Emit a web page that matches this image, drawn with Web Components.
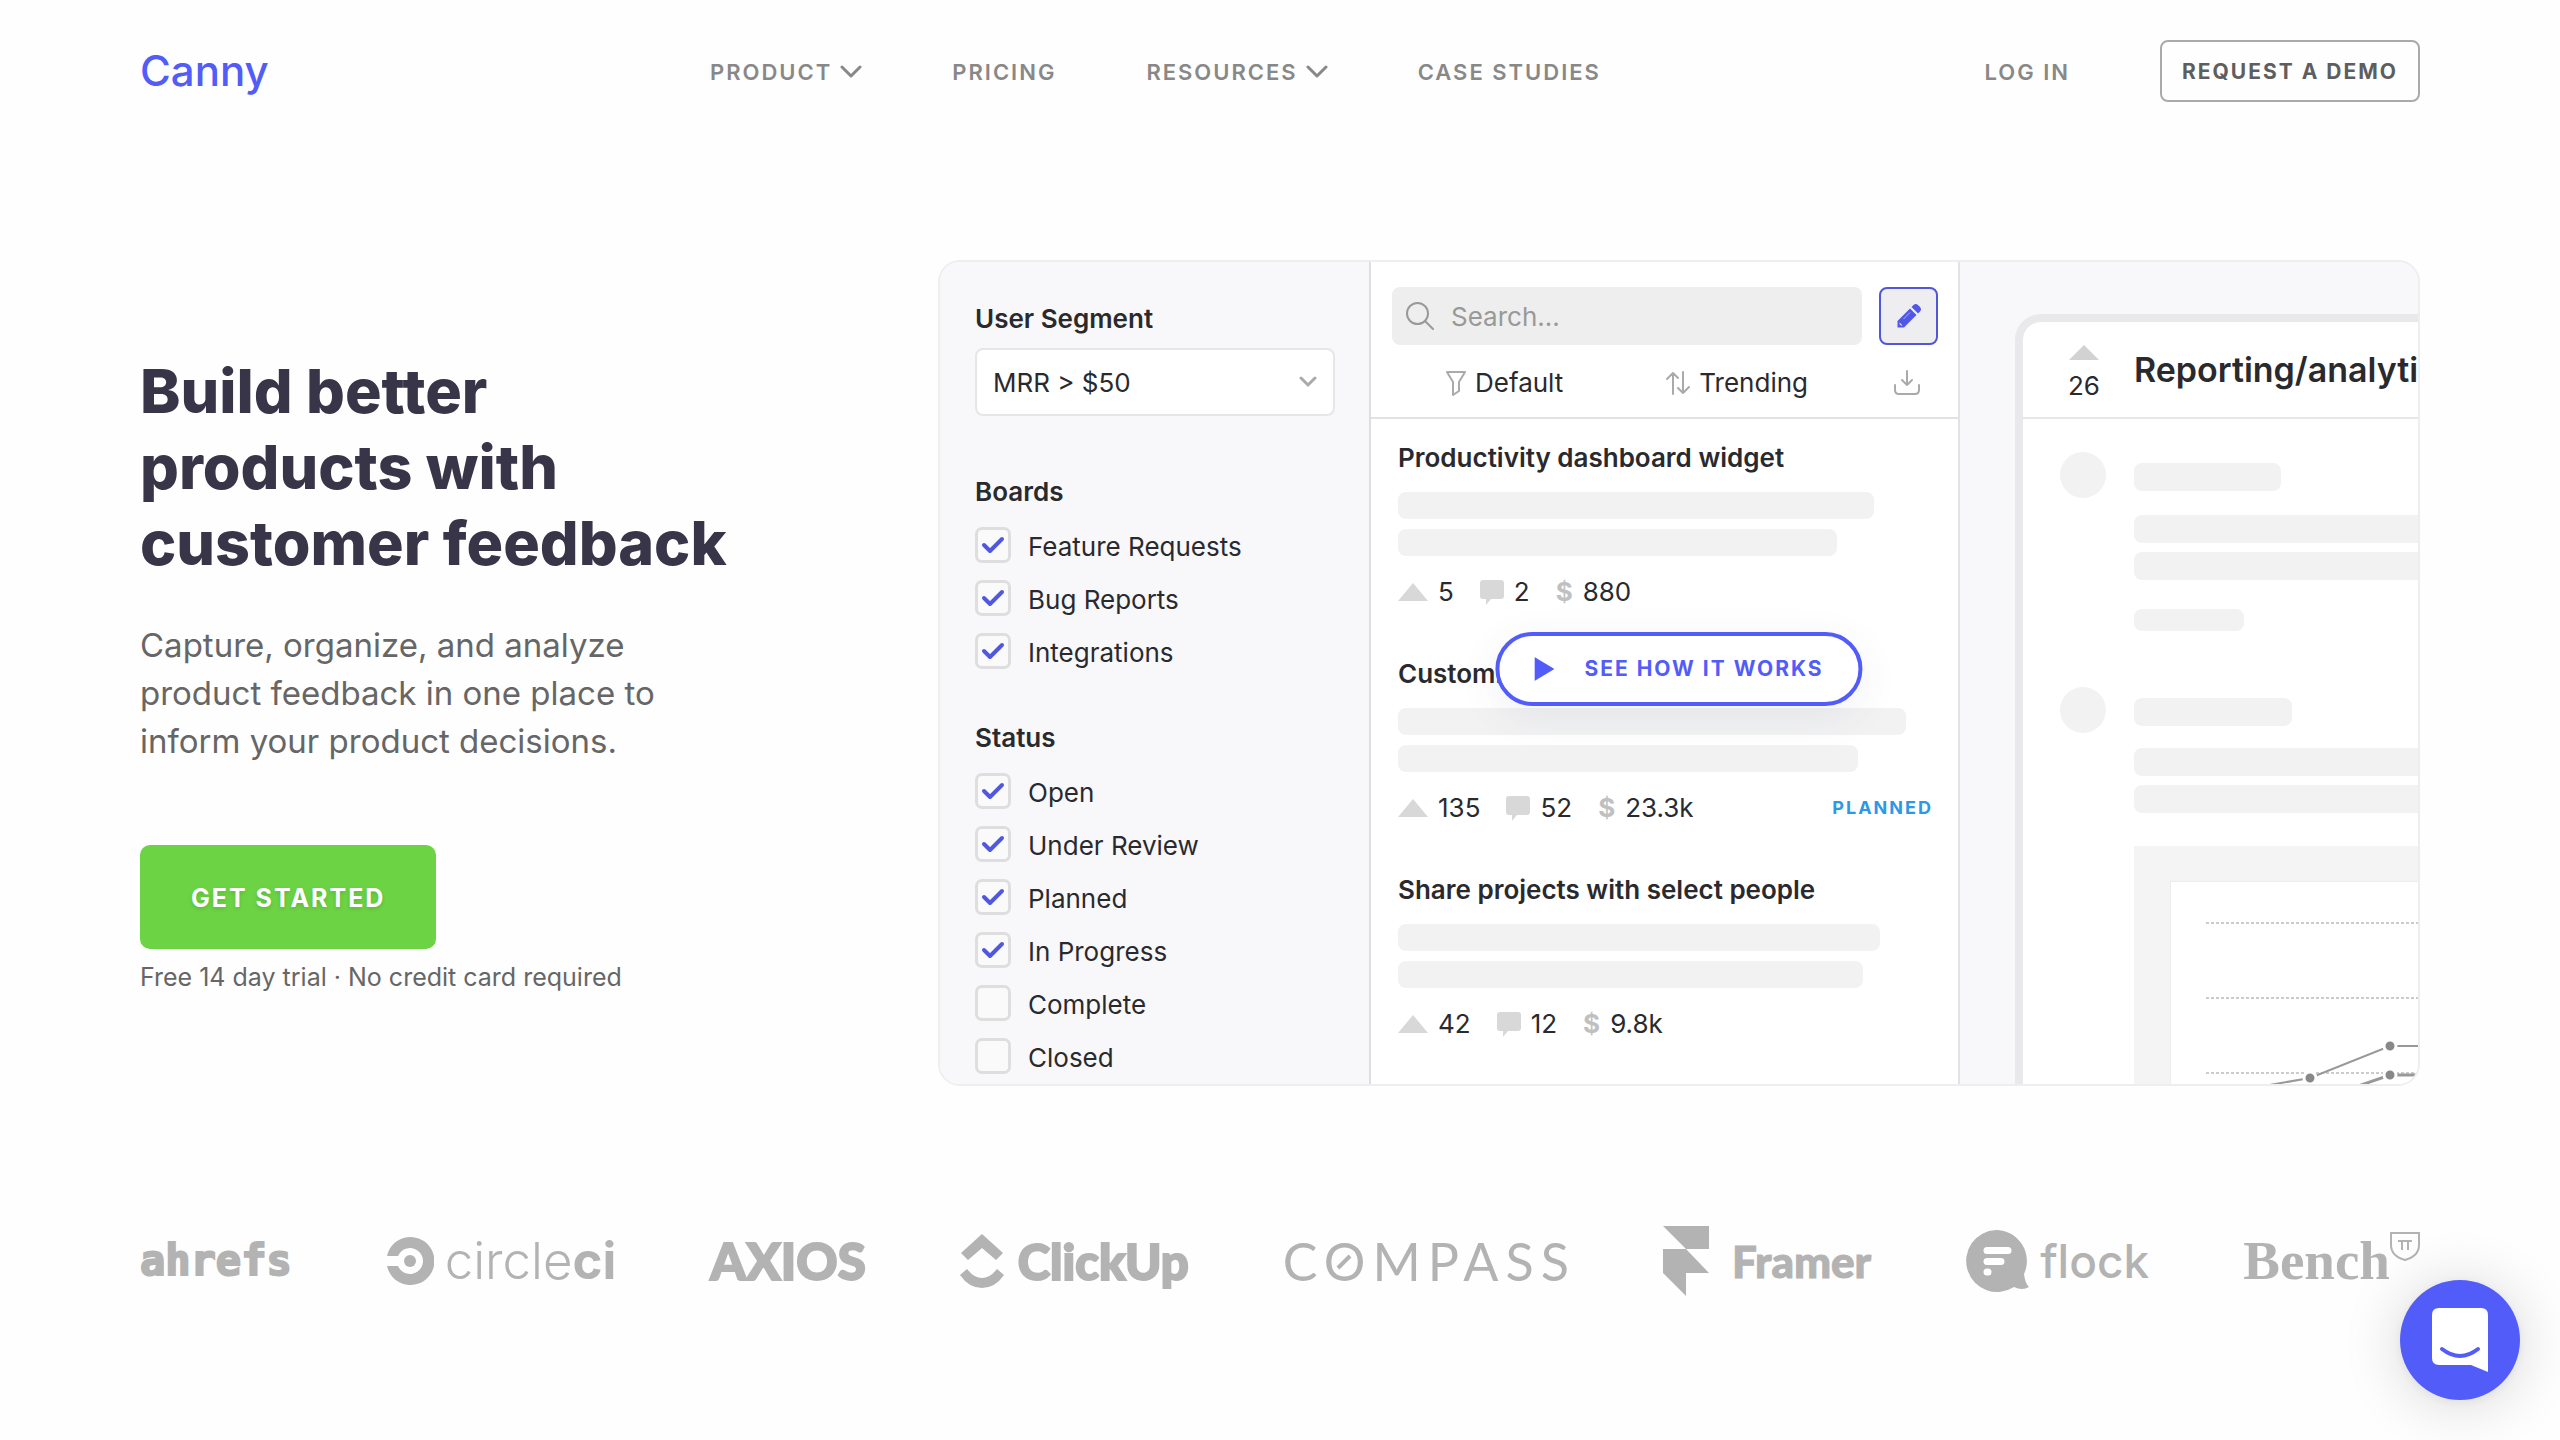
<!DOCTYPE html>
<html lang="en">
<head>
<meta charset="utf-8">
<title>Canny</title>
<style>
  html { --brand: #525df9; --ink: #2a2a2e; --muted: #888; --logo: #b3b3b3; --line: #e2e2e4; --skeleton: #f2f2f2; --panel: #f8f8fa; }
  body { margin: 0; background: #fefefe; color: var(--ink); font-family: Inter, "Liberation Sans", sans-serif; }
</style>
</head>
<body>
<canny-page></canny-page>

<script>
const define = (name, html, setup) => {
  const template = document.createElement('template');
  template.innerHTML = '<style>*{box-sizing:border-box}svg{display:block;flex:none}</style>' + html;
  customElements.define(name, class extends HTMLElement {
    constructor() {
      super();
      this.attachShadow({ mode: 'open' }).append(template.content.cloneNode(true));
    }
    connectedCallback() { if (setup) setup(this, this.shadowRoot); }
  });
};

define('nav-link', `
<style>
  :host { display: block; }
  a { display: flex; align-items: center; gap: 8px; padding-top: 2px; color: var(--muted); text-decoration: none; font-size: 22px; font-weight: 600; line-height: 28px; letter-spacing: 2px; white-space: nowrap; }
  svg { display: none; }
  :host([menu]) svg { display: block; }
</style>
<a href="#"><slot></slot><svg width="22" height="14" viewBox="0 0 22 14" fill="none" stroke="currentColor" stroke-width="3" stroke-linecap="round" stroke-linejoin="round"><path d="M2 2l9 9 9-9"/></svg></a>`);

define('site-header', `
<style>
  :host { display: grid; grid-template-columns: 25% 1fr auto; align-items: center; }
  .logo { color: var(--brand); font-size: 42px; font-weight: 500; line-height: 56px; text-decoration: none; }
  nav { display: flex; gap: 90px; }
  .side { display: flex; align-items: center; gap: 90px; }
  button { height: 62px; padding: 2px 20px 0; border: 2px solid #aaa; border-radius: 8px; background: none; color: #5e5e5e; font: 700 21px/28px Inter, sans-serif; letter-spacing: 2px; white-space: nowrap; }
</style>
<a class="logo" href="#">Canny</a>
<nav>
  <nav-link menu>PRODUCT</nav-link>
  <nav-link>PRICING</nav-link>
  <nav-link menu>RESOURCES</nav-link>
  <nav-link>CASE STUDIES</nav-link>
</nav>
<div class="side"><nav-link>LOG IN</nav-link><button type="button">REQUEST A DEMO</button></div>`);

define('hero-copy', `
<style>
  :host { display: block; white-space: nowrap; }
  h1 { margin: 0; color: #383549; font-size: 61px; font-weight: 800; line-height: 76px; }
  p { margin: 40px 0 80px; color: #666; font-size: 33px; line-height: 48px; }
  button { display: block; height: 104px; padding: 2px 51px 0; border: 0; border-radius: 10px; background: #6cd444; color: #fff; font: 700 25px/32px Inter, sans-serif; letter-spacing: 2px; text-shadow: 0 2px 4px rgba(0,0,0,.15); }
  small { display: block; margin-top: 12px; color: #666; font-size: 25px; line-height: 32px; }
</style>
<h1>Build better<br>products with<br>customer feedback</h1>
<p>Capture, organize, and analyze<br>product feedback in one place to<br>inform your product decisions.</p>
<button type="button">GET STARTED</button>
<small>Free 14 day trial · No credit card required</small>`);

define('check-row', `
<style>
  :host { display: block; }
  label { display: flex; align-items: center; gap: 17px; font-size: 26px; line-height: 33px; }
  .text { padding-top: 2px; }
  .box { display: grid; place-items: center; flex: none; }
  .box > * { grid-area: 1 / 1; }
  input { appearance: none; width: 36px; height: 36px; margin: 0; border: 3px solid #dededf; border-radius: 7px; background: #fafafb; }
  svg { visibility: hidden; color: #5158e0; }
  input:checked + svg { visibility: visible; }
</style>
<label><span class="box"><input type="checkbox"><svg width="24" height="18" viewBox="0 0 24 18" fill="none" stroke="currentColor" stroke-width="4" stroke-linecap="round" stroke-linejoin="round"><path d="M3 9l6 6L21 3"/></svg></span><span class="text"><slot></slot></span></label>`,
(host, root) => { root.querySelector('input').checked = host.hasAttribute('checked'); });

define('filter-panel', `
<style>
  :host { display: flex; flex-direction: column; gap: 53px; padding: 41px 34px 10px 35px; background: var(--panel); border-right: 2px solid #dedee0; }
  h2, .title { display: block; margin: 0 0 19px; font-size: 26px; font-weight: 600; line-height: 32px; }
  .title { margin-bottom: 13px; }
  section { display: flex; flex-direction: column; }
  .rows { display: flex; flex-direction: column; gap: 17px; }
  .select { display: grid; align-items: center; margin-bottom: 7px; }
  .select > * { grid-area: 1 / 1; }
  select { appearance: none; width: 100%; height: 68px; padding: 2px 16px 0; border: 2px solid #e6e6e9; border-radius: 8px; background: #fff; color: var(--ink); font: 26px/32px Inter, sans-serif; }
  svg { justify-self: end; margin-right: 18px; pointer-events: none; }
</style>
<section>
  <label class="title" for="segment">User Segment</label>
  <div class="select">
    <select id="segment"><option>MRR &gt; $50</option></select>
    <svg width="18" height="12" viewBox="0 0 18 12" fill="none" stroke="#aaa" stroke-width="3" stroke-linecap="round"><path d="M2 2l7 7 7-7"/></svg>
  </div>
</section>
<section>
  <h2>Boards</h2>
  <div class="rows">
    <check-row checked>Feature Requests</check-row>
    <check-row checked>Bug Reports</check-row>
    <check-row checked>Integrations</check-row>
  </div>
</section>
<section>
  <h2>Status</h2>
  <div class="rows">
    <check-row checked>Open</check-row>
    <check-row checked>Under Review</check-row>
    <check-row checked>Planned</check-row>
    <check-row checked>In Progress</check-row>
    <check-row>Complete</check-row>
    <check-row>Closed</check-row>
  </div>
</section>`);

define('post-item', `
<style>
  :host { display: block; }
  h3 { margin: 0 0 18px; font-size: 26px; font-weight: 600; line-height: 32px; white-space: nowrap; }
  .bar { height: 27px; border-radius: 8px; background: var(--skeleton); }
  .bar + .bar { margin-top: 10px; }
  .stats { display: flex; align-items: center; gap: 26px; margin-top: 20px; font-size: 26px; line-height: 32px; }
  .stat { display: flex; align-items: center; gap: 10px; }
  .stat b { color: #c0c0c0; font-weight: 700; }
  .tag { margin-left: auto; color: #2b98e8; font-size: 18px; font-weight: 700; letter-spacing: 2px; }
</style>
<h3><slot></slot></h3>
<div class="bar"></div><div class="bar"></div>
<div class="stats">
  <span class="stat"><svg width="30" height="18" viewBox="0 0 30 18" fill="#d8d8d8"><path d="M15 0l15 18H0z"/></svg><span id="votes"></span></span>
  <span class="stat"><svg width="24" height="26" viewBox="0 0 24 26" fill="#d8d8d8"><path d="M3 1h18q3 0 3 3v13q0 3-3 3H11l-5 6v-6H3q-3 0-3-3V4q0-3 3-3z"/></svg><span id="comments"></span></span>
  <span class="stat"><b>$</b><span id="mrr"></span></span>
  <span class="tag" id="tag"></span>
</div>`,
(host, root) => {
  for (const id of ['votes', 'comments', 'mrr', 'tag']) root.getElementById(id).textContent = host.getAttribute(id) || '';
  const widths = host.getAttribute('bars').split(' ');
  root.querySelectorAll('.bar').forEach((bar, i) => { bar.style.width = widths[i] + '%'; });
});

define('post-list', `
<style>
  :host { display: block; background: #fff; border-right: 2px solid var(--line); }
  header { padding: 25px 20px 18px 21px; border-bottom: 2px solid var(--line); }
  .top { display: flex; gap: 17px; }
  .search { flex: 1; min-width: 0; display: flex; align-items: center; gap: 17px; height: 58px; padding: 0 14px; border-radius: 8px; background: #eee; }
  input { flex: 1; min-width: 0; width: 100%; border: 0; padding: 2px 0 0; background: none; font: 26px/32px Inter, sans-serif; color: var(--ink); }
  input::placeholder { color: #999; opacity: 1; }
  .edit { display: grid; place-items: center; flex: none; width: 59px; height: 58px; padding: 0; border: 2px solid #5158d8; border-radius: 8px; background: #eeeef1; }
  .tools { display: flex; justify-content: flex-end; gap: 86px; margin-top: 22px; padding: 0 18px 0 54px; }
  .tools button { display: flex; align-items: center; gap: 9px; padding: 0; border: 0; background: none; color: var(--ink); font: 26px/32px Inter, sans-serif; }
  .tools button:first-child { margin-right: auto; }
  .posts { display: flex; flex-direction: column; gap: 50px; padding: 23px 25px 0 27px; }
</style>
<header>
  <div class="top">
    <label class="search">
      <svg width="28" height="28" viewBox="0 0 28 28" fill="none" stroke="#999" stroke-width="2" stroke-linecap="round"><circle cx="11.500" cy="11.500" r="10.500"/><path d="M19 19l8 8"/></svg>
      <input type="text" placeholder="Search..." aria-label="Search">
    </label>
    <button class="edit" type="button" aria-label="Write a post">
      <svg width="26" height="26" viewBox="0 0 26 26"><path fill="#5158e8" d="M17.500 2q2-2 4.500 0l2 2q2 2.500 0 4.500l-2 2L15.500 4z"/><path fill="#5158e8" d="M14 5.500l6.500 6.500L8 24.500H1.500V18z"/><path fill="#eeeef1" d="M3.500 19.500l3 3H5l-1.500-1.500z"/><path d="M14 9.500L7.500 16" stroke="#a9adf3" stroke-width="1"/></svg>
    </button>
  </div>
  <div class="tools">
    <button type="button"><svg width="20" height="26" viewBox="0 0 20 26" fill="none" stroke="#aaa" stroke-width="2" stroke-linejoin="round"><path d="M1 2h18l-6 10v9l-6 4V12z"/></svg>Default</button>
    <button type="button"><svg width="24" height="24" viewBox="0 0 24 24" fill="none" stroke="#aaa" stroke-width="2" stroke-linecap="round" stroke-linejoin="round"><path d="M7 23V2M1 8l6-6 5 5M17 1v21M12 17l5 5 6-6"/></svg>Trending</button>
    <button type="button" aria-label="Export"><svg width="26" height="26" viewBox="0 0 26 26" fill="none" stroke="#aaa" stroke-width="2" stroke-linecap="round" stroke-linejoin="round"><path d="M13 1v13M8 10l5 5 5-5M1 15v5q0 4 4 4h16q4 0 4-4v-5"/></svg></button>
  </div>
</header>
<div class="posts">
  <post-item votes="5" comments="2" mrr="880" bars="89 82">Productivity dashboard widget</post-item>
  <post-item votes="135" comments="52" mrr="23.3k" tag="PLANNED" bars="95 86">Customize</post-item>
  <post-item votes="42" comments="12" mrr="9.8k" bars="90 87">Share projects with select people</post-item>
</div>`);

define('post-detail', `
<style>
  :host { display: block; min-width: 0; height: 0; min-height: 100%; padding: 52px 0 0 55px; overflow: hidden; background: var(--panel); }
  article { width: 700px; height: 900px; border: 8px solid #e9e9eb; border-radius: 26px; background: #fff; }
  .head, .row { display: grid; grid-template-columns: 60px 1fr; column-gap: 20px; padding-left: 31px; }
  .head { height: 97px; align-items: center; border-bottom: 2px solid #e6e6e8; }
  .vote { display: flex; flex-direction: column; align-items: center; gap: 10px; padding-top: 8px; font-size: 26px; line-height: 32px; }
  h2 { margin: 0; font-size: 34px; font-weight: 600; line-height: 42px; white-space: nowrap; }
  .row { column-gap: 28px; grid-template-columns: 46px 1fr; padding-left: 37px; }
  .first { margin-top: 33px; }
  .second { margin-top: 56px; }
  .avatar { width: 46px; height: 46px; border-radius: 50%; background: var(--skeleton); }
  .bars { display: flex; flex-direction: column; gap: 9px; padding-top: 11px; }
  .bar { height: 28px; border-radius: 8px; background: var(--skeleton); }
  .name { width: 147px; margin-bottom: 15px; }
  .name.wide { width: 158px; margin-bottom: 13px; }
  .meta { width: 110px; height: 22px; margin-top: 20px; }
  .chart { margin-top: 24px; padding: 35px 0 0 36px; background: #f4f4f5; }
</style>
<article>
  <div class="head">
    <div class="vote"><svg width="30" height="15" viewBox="0 0 30 15" fill="#d2d2d2"><path d="M15 0l15 15H0z"/></svg>26</div>
    <h2>Reporting/analyti</h2>
  </div>
  <div class="row first"><div class="avatar"></div><div class="bars"><div class="bar name"></div><div class="bar"></div><div class="bar"></div><div class="bar meta"></div></div></div>
  <div class="row second"><div class="avatar"></div><div class="bars"><div class="bar name wide"></div><div class="bar"></div><div class="bar"></div>
    <div class="chart"><svg width="400" height="260" viewBox="0 0 400 260"><rect width="400" height="260" fill="#fff" stroke="#ececec" stroke-width="2"/><g fill="none" stroke="#ccc" stroke-width="2" stroke-dasharray="3 2"><path d="M36 42h365M36 117h365M36 192h365"/></g><g fill="none" stroke="#999" stroke-width="2"><path d="M82 207l58-10 80-32h180"/><path d="M142 221l78-27h180" stroke-width="3"/></g><g fill="#888" stroke="#fff" stroke-width="3"><circle cx="140" cy="197" r="6"/><circle cx="220" cy="165" r="6"/><circle cx="220" cy="194" r="6"/></g></svg></div>
  </div></div>
</article>`);

define('product-preview', `
<style>
  :host { display: grid; grid-template-columns: minmax(0, 431fr) minmax(0, 589fr) minmax(0, 458fr); position: relative; overflow: hidden; border: 2px solid #eeeeef; border-radius: 22px; }
  .play { position: absolute; top: 45%; left: 50%; transform: translateX(-50%); display: flex; align-items: center; gap: 30px; height: 74px; padding: 0 35px; border: 4px solid var(--brand); border-radius: 37px; background: #fff; color: var(--brand); font: 700 21px/28px Inter, sans-serif; letter-spacing: 2px; white-space: nowrap; box-shadow: 0 10px 40px rgba(60,80,140,.08); }
</style>
<filter-panel></filter-panel>
<post-list></post-list>
<post-detail></post-detail>
<button class="play" type="button"><svg width="20" height="24" viewBox="0 0 20 24" fill="currentColor"><path d="M0 0l20 12L0 24z"/></svg>SEE HOW IT WORKS</button>`);

define('brand-logo', `
<style>
  :host { display: flex; align-items: center; color: var(--logo); line-height: 60px; white-space: nowrap; }
</style>
<slot name="mark"></slot><slot></slot>`);

define('customer-logos', `
<style>
  :host { display: flex; align-items: center; justify-content: space-between; height: 70px; color: var(--logo); }
  .ahrefs { font: 700 42px/60px "DejaVu Sans Mono", monospace; -webkit-text-stroke: 2px currentColor; }
  .circle { gap: 11px; font-size: 51px; font-weight: 300; }
  .circle b { font-weight: 700; }
  .axios { font: 900 51px/60px Lato, sans-serif; -webkit-text-stroke: 2px currentColor; }
  .clickup { gap: 14px; font: 900 49px/60px Lato, sans-serif; -webkit-text-stroke: 2px currentColor; }
  .compass { margin-right: -7px; font: 400 52px/60px Lato, sans-serif; letter-spacing: 7px; }
  .o { position: relative; }
  .o svg { position: absolute; left: 12px; top: 24px; }
  .framer { gap: 23px; font: 900 44px/60px Lato, sans-serif; -webkit-text-stroke: 1px currentColor; }
  .flock { gap: 11px; font-size: 46px; font-weight: 500; }
  .bench { font: 700 55px/60px "Liberation Serif", serif; }
  .bench svg { align-self: flex-start; }
</style>
<brand-logo class="ahrefs">ahrefs</brand-logo>
<brand-logo class="circle"><svg slot="mark" width="48" height="48" viewBox="0 0 48 48" fill="currentColor"><circle cx="24" cy="24" r="6"/><path d="M1 19A24 24 0 1 1 1 29h11a13 13 0 1 0 0-10z"/></svg><span>circle<b>ci</b></span></brand-logo>
<brand-logo class="axios">AXIOS</brand-logo>
<brand-logo class="clickup"><svg slot="mark" width="44" height="54" viewBox="0 0 44 54" fill="currentColor"><path d="M22 0l21 19-7 7-14-12L8 26l-7-7z"/><path d="M7 35q7 9 15 9t15-9l7 6q-9 13-22 13T0 41z"/></svg>ClickUp</brand-logo>
<brand-logo class="compass"><span>C<span class="o">O<svg width="16" height="16" viewBox="0 0 16 16" stroke="currentColor" stroke-width="4"><path d="M2 14L14 2"/></svg></span>MPASS</span></brand-logo>
<brand-logo class="framer"><svg slot="mark" width="46" height="70" viewBox="0 0 46 70" fill="currentColor"><path d="M0 0h46v23H23zM0 23h23l23 24H23v23L0 47z"/></svg>Framer</brand-logo>
<brand-logo class="flock"><svg slot="mark" width="64" height="62" viewBox="0 0 64 62"><path fill="currentColor" d="M31 0a31 31 0 0 1 28 44q1 9 5 13-7 4-15 0A31 31 0 1 1 31 0z"/><g stroke="#fff" stroke-width="7" stroke-linecap="round"><path d="M22 20.500h21M22 31.500h14M22 42h1"/></g></svg>flock</brand-logo>
<brand-logo class="bench">Bench<svg width="30" height="30" viewBox="0 0 30 30" fill="none" stroke="currentColor" stroke-width="2"><path d="M1 2h28v12q0 11-14 15Q1 25 1 14z"/><path d="M8 10h14M12 10v9M18 10v9"/></svg></brand-logo>`);

define('chat-launcher', `
<style>
  :host { position: fixed; right: 40px; bottom: 40px; }
  button { display: grid; place-items: center; width: 120px; height: 120px; padding: 0; border: 0; border-radius: 50%; background: var(--brand); box-shadow: 0 4px 60px rgba(0,0,0,.16), 0 2px 12px rgba(0,0,0,.06); }
</style>
<button type="button" aria-label="Open chat"><svg width="56" height="64" viewBox="0 0 56 64"><path fill="#fff" d="M7 0h42q7 0 7 7v57L39 57H7q-7 0-7-7V7q0-7 7-7z"/><path d="M10 41q18 14 36 0" fill="none" stroke="#525df9" stroke-width="4" stroke-linecap="round"/></svg></button>`);

define('canny-page', `
<style>
  :host { display: block; padding: 40px 140px 0; }
  main { display: grid; grid-template-columns: 35fr 65fr; align-items: center; margin-top: 158px; }
  customer-logos { margin-top: 140px; }
</style>
<site-header></site-header>
<main><hero-copy></hero-copy><product-preview></product-preview></main>
<customer-logos></customer-logos>
<chat-launcher></chat-launcher>`);
</script>
</body>
</html>
